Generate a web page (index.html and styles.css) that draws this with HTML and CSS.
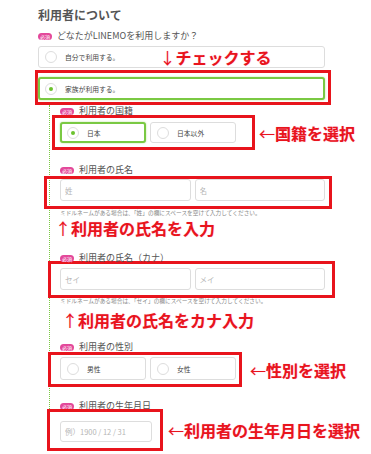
FILE: index.html
```html
<!DOCTYPE html>
<html lang="ja">
<head>
  <meta charset="UTF-8">
  <meta name="viewport" content="width=device-width, initial-scale=1.0">
  <title>利用者について</title>
  <link rel="stylesheet" href="styles.css">
</head>
<body>
  <div class="page">
    <h2 class="title">利用者について</h2>

    <div class="label"><span class="badge">必須</span>どなたがLINEMOを利用しますか？</div>
    <div class="choice wide"><span class="radio"></span><span class="choice-text">自分で利用する。</span><span class="note note-check"><span class="arrow">↓</span>チェックする</span></div>
    <div class="mark mark-who">
      <div class="choice wide selected"><span class="radio"></span><span class="choice-text">家族が利用する。</span></div>
    </div>

    <div class="sub">
      <div class="label"><span class="badge">必須</span>利用者の国籍</div>
      <div class="row row-nation">
        <div class="mark mark-nation">
          <div class="choices">
            <div class="choice selected"><span class="radio"></span><span class="choice-text">日本</span></div>
            <div class="choice"><span class="radio"></span><span class="choice-text">日本以外</span></div>
          </div>
        </div>
        <span class="note"><span class="arrow">←</span>国籍を選択</span>
      </div>

      <div class="label label-name"><span class="badge">必須</span>利用者の氏名</div>
      <div class="mark mark-name">
        <div class="inputs">
          <input type="text" placeholder="姓">
          <input type="text" placeholder="名">
        </div>
      </div>
      <p class="help">ミドルネームがある場合は、「姓」の欄にスペースを空けて入力してください。</p>
      <div class="note note-name"><span class="arrow">↑</span>利用者の氏名を入力</div>

      <div class="label label-kana"><span class="badge">必須</span>利用者の氏名（カナ）</div>
      <div class="mark mark-kana">
        <div class="inputs">
          <input type="text" placeholder="セイ">
          <input type="text" placeholder="メイ">
        </div>
      </div>
      <p class="help help-kana">ミドルネームがある場合は、「セイ」の欄にスペースを空けて入力してください。</p>
      <div class="note note-kana"><span class="arrow">↑</span>利用者の氏名をカナ入力</div>

      <div class="label label-sex"><span class="badge">必須</span>利用者の性別</div>
      <div class="row row-sex">
        <div class="mark mark-sex">
          <div class="choices">
            <div class="choice"><span class="radio"></span><span class="choice-text">男性</span></div>
            <div class="choice"><span class="radio"></span><span class="choice-text">女性</span></div>
          </div>
        </div>
        <span class="note"><span class="arrow">←</span>性別を選択</span>
      </div>

      <div class="label label-birth"><span class="badge">必須</span>利用者の生年月日</div>
      <div class="row row-birth">
        <div class="mark mark-birth">
          <input type="text" class="date" placeholder="例）1900 / 12 / 31">
        </div>
        <span class="note"><span class="arrow">←</span>利用者の生年月日を選択</span>
      </div>
    </div>
  </div>
</body>
</html>
```

FILE: styles.css
```css
body {
  margin: 0;
  background-color: #fff;
  font-family: 'Noto Sans CJK JP', 'Noto Sans', sans-serif;
  color: #555;
}

.page {
  width: 287px;
  padding: 6px 0 0 38px;
}

.title {
  margin: 0;
  font-size: 12px;
  font-weight: bold;
  line-height: 18px;
  color: #555;
}

.label {
  display: flex;
  align-items: center;
  gap: 5px;
  margin-top: 6px;
  font-size: 9px;
  line-height: 12px;
  color: #555;
}

.badge {
  width: 14px;
  height: 7px;
  border-radius: 4px;
  background-color: #e3489a;
  color: #fff;
  font-size: 5px;
  line-height: 7px;
  text-align: center;
  flex: none;
}

.choice {
  display: flex;
  align-items: center;
  box-sizing: border-box;
  height: 21px;
  width: 86px;
  padding: 0 6px;
  border: 1px solid #ddd;
  border-radius: 3px;
  background-color: #fff;
}

.choice.wide {
  width: auto;
  height: 22px;
  margin-top: 4px;
}

.radio {
  position: relative;
  flex: none;
  box-sizing: border-box;
  width: 12px;
  height: 12px;
  margin-right: 8px;
  border: 1px solid #ddd;
  border-radius: 50%;
  background-color: #fff;
}

.choice-text {
  font-size: 6.8px;
  color: #444;
  white-space: nowrap;
}

.selected {
  border: 2px solid #7ac943;
  box-shadow: 0 0 2px #b4e08e;
  padding: 0 5px;
}

.selected .radio::after {
  content: '';
  position: absolute;
  left: 3px;
  top: 3px;
  width: 4px;
  height: 4px;
  border-radius: 50%;
  background-color: #6cc22f;
}

.note {
  color: #e8141c;
  font-size: 16px;
  font-weight: bold;
  line-height: 18px;
  white-space: nowrap;
  text-shadow: 0 0 1px #ff9fc0;
}

.arrow {
  font-weight: normal;
}

.note-check {
  margin-left: 40px;
}

.mark {
  box-sizing: border-box;
  border: 3px solid #e8141c;
}

.mark-who {
  margin: 2px -6px 0 -3px;
  padding: 4px 3px 2px 0;
}

.mark-who .choice {
  height: 23px;
  margin-top: 0;
}

.sub {
  margin-left: 11px;
  padding-left: 10px;
  border-left: 1px dotted #7ac943;
}

.sub .label:first-child {
  margin-top: 0;
}

.row {
  display: flex;
  align-items: center;
}

.choices {
  display: flex;
  gap: 4px;
}

.row-nation {
  margin: -2px 0 0 -8px;
  gap: 4px;
}

.mark-nation {
  padding: 4px 16px 4px 5px;
}

.label-name {
  margin-top: 14px;
}

.inputs {
  display: grid;
  grid-template-columns: 1fr 1fr;
  gap: 4px;
}

input {
  box-sizing: border-box;
  width: 100%;
  height: 22px;
  margin: 0;
  padding: 0 4px;
  border: 1px solid #ddd;
  border-radius: 3px;
  font-family: 'Noto Sans CJK JP', 'Noto Sans', sans-serif;
  font-size: 7.5px;
  background-color: #fff;
}

input::placeholder {
  color: #b5b5b5;
}

.mark-name {
  margin: 0 -7px 0 -16px;
  padding: 0 4px 5px 13px;
}

.help {
  margin: 0;
  font-size: 5.7px;
  line-height: 8px;
  color: #888;
  white-space: nowrap;
}

.note-name {
  margin: 3px 0 0 -5px;
  line-height: 16px;
}

.label-kana {
  margin-top: 16px;
}

.mark-kana {
  margin: -3px -10px 0 -12px;
  padding: 4px 7px 5px 9px;
}

.help-kana {
  margin-top: -1px;
}

.note-kana {
  margin: 6px 0 0 2px;
  line-height: 19px;
}

.label-sex {
  margin-top: 11px;
}

.row-sex {
  margin: -1px 0 0 -12px;
  gap: 8px;
}

.mark-sex {
  padding: 2px 3px 4px 9px;
}

.mark-sex .choice {
  height: 23px;
}

.label-birth {
  margin-top: 13px;
}

.row-birth {
  margin: -3px 0 0 -13px;
  gap: 5px;
}

.mark-birth {
  padding: 4px 8px 6px 10px;
}

.date {
  width: 92px;
  height: 21px;
}
```
